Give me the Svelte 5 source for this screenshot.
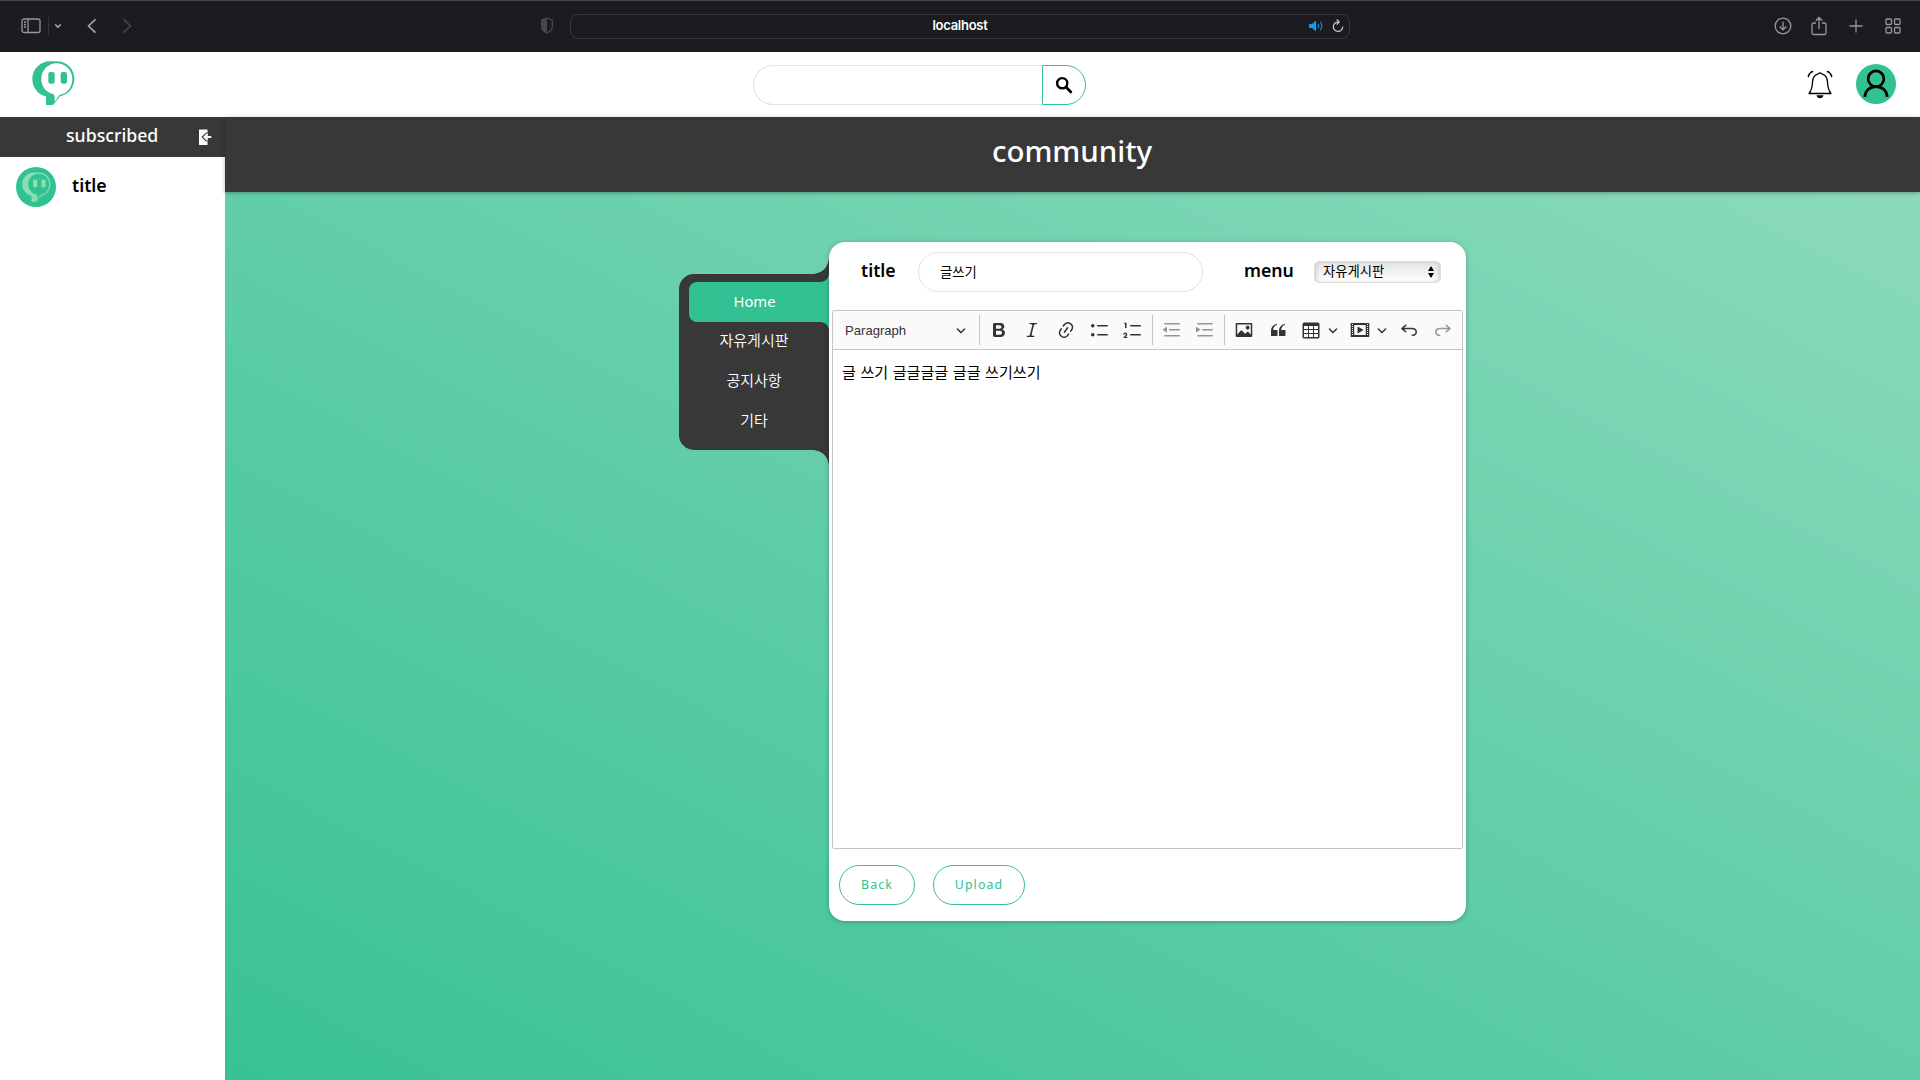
<script>
  const chev = 'M.941 4.523a.75.75 0 1 1 1.06-1.06l3.006 3.005 3.005-3.005a.75.75 0 1 1 1.06 1.06l-3.549 3.55a.75.75 0 0 1-1.168-.136L.941 4.523z';
  const lines = 'M2 3.75c0 .414.336.75.75.75h14.5a.75.75 0 1 0 0-1.5H2.75a.75.75 0 0 0-.75.75zm5 6c0 .414.336.75.75.75h9.5a.75.75 0 1 0 0-1.5h-9.5a.75.75 0 0 0-.75.75zM2.75 16.5h14.5a.75.75 0 1 0 0-1.5H2.75a.75.75 0 1 0 0 1.5z';
  const undo = 'm5.042 9.367 2.189 1.837a.75.75 0 0 1-.965 1.149l-3.788-3.18a.747.747 0 0 1-.21-.284.75.75 0 0 1 .17-.945L6.23 4.762a.75.75 0 1 1 .964 1.15L4.863 7.866h8.917A.75.75 0 0 1 14 7.9a4 4 0 1 1-1.477 7.718l.344-1.489a2.5 2.5 0 1 0 1.094-4.73l.008-.032H5.042z';
  const tools = [
    { name: 'Bold', d: 'M10.187 17H5.773c-.637 0-1.092-.138-1.364-.415-.273-.277-.409-.718-.409-1.323V4.738c0-.617.14-1.062.419-1.332.279-.27.73-.406 1.354-.406h4.68c.69 0 1.288.041 1.793.124.506.083.96.242 1.36.478.341.197.644.447.906.75a3.262 3.262 0 0 1 .808 2.162c0 1.401-.722 2.426-2.167 3.075C15.05 10.175 16 11.315 16 13.01a3.756 3.756 0 0 1-2.296 3.504 6.1 6.1 0 0 1-1.517.377c-.571.073-1.238.11-2 .11zm-.217-6.217H7v4.087h3.069c1.977 0 2.965-.69 2.965-2.072 0-.707-.256-1.22-.768-1.537-.512-.319-1.277-.478-2.296-.478zM7 5.13v3.619h2.606c.729 0 1.292-.067 1.69-.2a1.6 1.6 0 0 0 .91-.765c.165-.267.247-.566.247-.897 0-.707-.26-1.176-.778-1.409-.519-.232-1.31-.348-2.375-.348H7z' },
    { name: 'Italic', d: 'm9.586 14.633.021.004c-.036.335.095.655.393.962.082.083.173.15.274.201h1.474a.6.6 0 1 1 0 1.2H5.304a.6.6 0 0 1 0-1.2h1.15c.474-.07.809-.182 1.005-.334.157-.122.291-.32.404-.597l2.416-9.55a1.053 1.053 0 0 0-.281-.823 1.12 1.12 0 0 0-.442-.296H8.15a.6.6 0 0 1 0-1.2h6.443a.6.6 0 1 1 0 1.2h-1.195c-.376.056-.65.155-.823.296-.215.175-.423.439-.623.79l-2.366 9.347z' },
    { name: 'Link', d: 'm11.077 15 .991-1.416a.75.75 0 1 1 1.229.86l-1.148 1.64a.748.748 0 0 1-.217.206 5.251 5.251 0 0 1-8.503-5.955.741.741 0 0 1 .12-.274l1.147-1.639a.75.75 0 1 1 1.228.86L4.933 10.7l.006.003a3.75 3.75 0 0 0 6.132 4.294l.006.004zm5.494-5.335a.748.748 0 0 1-.12.274l-1.147 1.639a.75.75 0 1 1-1.228-.86l.86-1.23a3.75 3.75 0 0 0-6.144-4.301l-.86 1.229a.75.75 0 0 1-1.229-.86l1.148-1.64a.748.748 0 0 1 .217-.206 5.251 5.251 0 0 1 8.503 5.955zm-4.563-2.532a.75.75 0 0 1 .184 1.045l-3.155 4.505a.75.75 0 1 1-1.229-.86l3.155-4.506a.75.75 0 0 1 1.045-.184z' },
    { name: 'Bulleted List', d: 'M7 5.75c0 .414.336.75.75.75h9.5a.75.75 0 1 0 0-1.5h-9.5a.75.75 0 0 0-.75.75zm-6 0C1 4.784 1.777 4 2.75 4c.966 0 1.75.777 1.75 1.75 0 .966-.777 1.75-1.75 1.75C1.784 7.5 1 6.723 1 5.75zm6 9c0 .414.336.75.75.75h9.5a.75.75 0 1 0 0-1.5h-9.5a.75.75 0 0 0-.75.75zm-6 0c0-.966.777-1.75 1.75-1.75.966 0 1.75.777 1.75 1.75 0 .966-.777 1.75-1.75 1.75-.966 0-1.75-.777-1.75-1.75z' },
    { name: 'Numbered List', d: 'M7 5.75c0 .414.336.75.75.75h9.5a.75.75 0 1 0 0-1.5h-9.5a.75.75 0 0 0-.75.75zM3.5 3v5H2V3.7H1v-1h2.5V3zM.343 17.857l2.59-3.257H2.92a.6.6 0 1 0-1.04 0H.302a2 2 0 1 1 3.995 0h-.001c-.048.405-.16.734-.333.988-.175.254-.59.692-1.244 1.312H4.3v1h-4l.043-.043zM7 14.75a.75.75 0 0 1 .75-.75h9.5a.75.75 0 1 1 0 1.5h-9.5a.75.75 0 0 1-.75-.75z' },
    { sep: true },
    { name: 'Decrease indent', dim: true, d: lines + 'M4.368 6.95.98 9.358a.4.4 0 0 0 .013.661l3.39 2.207A.4.4 0 0 0 5 11.892V7.275a.4.4 0 0 0-.632-.326z' },
    { name: 'Increase indent', dim: true, d: lines + 'M1.632 6.95 5.02 9.358a.4.4 0 0 1-.013.661l-3.39 2.207A.4.4 0 0 1 1 11.892V7.275a.4.4 0 0 1 .632-.326z' },
    { sep: true },
    { name: 'Insert image', d: 'M6.91 10.54c.26-.23.64-.21.88.03l3.36 3.14 2.23-2.06a.64.64 0 0 1 .87 0l2.52 2.97V4.5H3.2v10.12l3.71-4.08zm10.27-7.51c.6 0 1.09.47 1.09 1.05v11.84c0 .59-.49 1.06-1.09 1.06H2.79c-.6 0-1.09-.47-1.09-1.06V4.08c0-.58.49-1.05 1.1-1.05h14.38zm-5.22 5.56a1.96 1.96 0 1 1 3.4-1.96 1.96 1.96 0 0 1-3.4 1.96z' },
    { name: 'Block quote', d: 'M3 10.423a6.5 6.5 0 0 1 6.056-6.408l.038.67C6.448 5.423 5.354 7.663 5.22 10H9c.552 0 .5.432.5.986v4.511c0 .554-.448.503-1 .503h-5c-.552 0-.5-.449-.5-1.003v-4.574zm8 0a6.5 6.5 0 0 1 6.056-6.408l.038.67c-2.646.739-3.74 2.979-3.873 5.315H17c.552 0 .5.432.5.986v4.511c0 .554-.448.503-1 .503h-5c-.552 0-.5-.449-.5-1.003v-4.574z' },
    { name: 'Insert table', menu: true, d: 'M3 6v3h4V6H3zm0 4v3h4v-3H3zm0 4v3h4v-3H3zm5 3h4v-3H8v3zm5 0h4v-3h-4v3zm4-4v-3h-4v3h4zm0-4V6h-4v3h4zm1.5 8a1.5 1.5 0 0 1-1.5 1.5H3A1.5 1.5 0 0 1 1.5 17V4c.222-.863 1.068-1.5 2-1.5h13c.932 0 1.778.637 2 1.5v13zM12 13v-3H8v3h4zm0-4V6H8v3h4z' },
    { name: 'Insert media', menu: true, d: 'M18.68 3.03c.6 0 .59-.03.59.55v12.84c0 .59.01.56-.59.56H1.29c-.6 0-.59.03-.59-.56V3.58c0-.58-.01-.55.6-.55h17.38zM15.77 15V5H4.2v10h11.57zM2 4v1h1V4H2zm0 2v1h1V6H2zm0 2v1h1V8H2zm0 2v1h1v-1H2zm0 2v1h1v-1H2zm0 2v1h1v-1H2zM17 4v1h1V4h-1zm0 2v1h1V6h-1zm0 2v1h1V8h-1zm0 2v1h1v-1h-1zm0 2v1h1v-1h-1zm0 2v1h1v-1h-1zM7.5 7.177a.4.4 0 0 1 .593-.351l5.133 2.824a.4.4 0 0 1 0 .7l-5.133 2.824a.4.4 0 0 1-.593-.35V7.176v.001z' },
    { name: 'Undo', d: undo },
    { name: 'Redo', dim: true, flip: true, d: undo }
  ];
  const menu = ['Home', '자유게시판', '공지사항', '기타'];
</script>

{#snippet mark()}
  <path fill-rule="evenodd" d="M54 1H75C105 1 127 25 127 54C127 82 107 102 84 106L63 132H42V106C18 101 1 80 1 54C1 25 24 1 54 1ZM74 7C48 7 28 28 28 54C28 77 42 94 63 99Q68 101 68 106V122L82 102C105 99 121 79 121 54C121 28 100 7 74 7Z" />
  <rect x="49" y="33" width="19" height="35" rx="6" />
  <rect x="86" y="33" width="19" height="35" rx="6" />
{/snippet}

<div class="page">
  <div class="chrome">
    <div class="left">
      <svg class="panel" width="20" height="16" viewBox="0 0 20 16"><rect x="1" y="1" width="18" height="13.5" rx="2" /><path d="M7 1v13.500M3 4h2M3 6.500h2M3 9h2" /></svg>
      <span class="bar"></span>
      <svg class="tiny" width="8" height="6" viewBox="0 0 8 6"><path d="M1.300 1.500 4 4.200 6.700 1.500" /></svg>
      <svg class="back" width="10" height="16" viewBox="0 0 10 16"><path d="M8.500 1.300 1.500 8l7 6.700" /></svg>
      <svg class="fwd" width="10" height="16" viewBox="0 0 10 16"><path d="m1.500 1.300 7 6.700-7 6.700" /></svg>
    </div>
    <div class="mid">
      <svg class="shield" width="14" height="17" viewBox="0 0 14 17"><path d="M7 1 12.300 3v7c0 2.500-2.500 4.500-5.300 6C4.200 14.500 1.700 12.500 1.700 10V3z" fill="none" stroke="#48474c" stroke-width="1.300" /><path d="M7 .5 1 2.700V10c0 3 3 5 6 6.500z" fill="#48474c" /></svg>
      <div class="url">
        <span>localhost</span>
        <div class="urlicons">
          <svg width="14" height="12" viewBox="0 0 14 12"><path d="M0 4h3l4-3.500v11L3 8H0z" fill="#0a9bf5" /><path d="M9 3.800q1.400 2.200 0 4.400M11.300 1.600q3 4.400 0 8.800" fill="none" stroke="#0a84d5" stroke-width="1.200" /></svg>
          <svg width="12" height="14" viewBox="0 0 12 14"><path d="M6.300 3A4.700 4.700 0 1 0 10.700 7.700M4.700.5 7.200 3 4.700 5.500" fill="none" stroke="#c9c9cb" stroke-width="1.200" /></svg>
        </div>
      </div>
    </div>
    <div class="right">
      <svg width="18" height="18" viewBox="0 0 18 18"><circle cx="9" cy="9" r="7.800" /><path d="M9 4.700v8M5.700 9.500 9 12.800l3.300-3.300" /></svg>
      <svg width="18" height="20" viewBox="0 0 18 20"><path d="M6 7H3.500Q2 7 2 8.500V17q0 1.500 1.500 1.500h11q1.500 0 1.500-1.500V8.500Q16 7 14.500 7H12M9 13V1.700M5.800 4.700 9 1.500l3.200 3.200" /></svg>
      <svg width="18" height="18" viewBox="0 0 18 18"><path d="M9 2.500v13M2.500 9h13" /></svg>
      <svg width="18" height="18" viewBox="0 0 18 18"><rect x="2" y="2" width="5.500" height="5.500" rx="1" /><rect x="10.500" y="2" width="5.500" height="5.500" rx="1" /><rect x="2" y="10.500" width="5.500" height="5.500" rx="1" /><rect x="10.500" y="10.500" width="5.500" height="5.500" rx="1" /></svg>
    </div>
  </div>

  <header>
    <svg class="logo" width="43" height="44" viewBox="0 0 129 132">{@render mark()}</svg>
    <div class="search">
      <div class="field"></div>
      <div class="go"><svg width="18" height="18" viewBox="0 0 18 18"><circle cx="7.200" cy="7.200" r="5.100" fill="none" stroke="#000" stroke-width="2.400" /><path d="m11 11 4.800 4.900" stroke="#000" stroke-width="2.800" stroke-linecap="round" /></svg></div>
    </div>
    <div class="user">
      <svg width="26" height="30" viewBox="0 0 26 30"><path d="M2 23.500C5.200 19.500 5.200 17 5.500 12c.2-4 2-6.700 5-7.800L13 2.700l2.500 1.500c3 1.100 4.800 3.800 5 7.800.3 5 .3 7.500 3.500 11.500z" fill="none" stroke="#000" stroke-width="1.300" stroke-linejoin="round" /><path d="M9.500 25.300h7c-.3 2-1.700 3-3.500 3s-3.200-1-3.500-3z" /><path d="M1.300 6.500C2 4 3.300 2.300 5.500 1.500M24.700 6.500c-.7-2.500-2-4.200-4.200-5" fill="none" stroke="#000" stroke-width="1.500" stroke-linecap="round" stroke-dasharray="3.400 1" /></svg>
      <div class="avatar"><svg width="40" height="40" viewBox="0 0 40 40"><circle cx="20" cy="14.800" r="7.900" /><path d="M8.800 33C9 27 13.500 22.700 20 22.700S31 27 31.200 33" /></svg></div>
    </div>
  </header>

  <div class="body">
    <aside>
      <div class="subhead"><span>subscribed</span>
        <svg width="14" height="17" viewBox="0 0 14 17"><path d="M1 .5h8.500V5.500H7L4.500 8 7 11.500h2.500v4.500H1z" fill="#fff" /><path d="M9.800 4.600 6.300 8l3.500 3.400" fill="none" stroke="#383838" stroke-width="4" /><path d="M13.300 8H7M9.600 5 6.600 8l3 3" fill="none" stroke="#fff" stroke-width="2.200" /></svg>
      </div>
      <div class="sub">
        <div class="badge"><svg width="29" height="30" viewBox="0 0 129 132">{@render mark()}</svg></div>
        <span>title</span>
      </div>
    </aside>
    <main>
      <div class="banner">community</div>
      <div class="stage">
        <nav>
          {#each menu as item, i}
            <div class="item" class:active={i === 0}>{item}</div>
          {/each}
        </nav>
        <section>
          <div class="form">
            <b class="l1">title</b>
            <div class="input">글쓰기</div>
            <b class="l2">menu</b>
            <div class="select"><span>자유게시판</span><svg width="8" height="12" viewBox="0 0 8 12"><path d="M4 0 7 5H1zM4 12l3-5H1z" /></svg></div>
          </div>
          <div class="editor">
            <div class="toolbar">
              <div class="para"><span>Paragraph</span><svg width="10" height="10" viewBox="0 0 10 10"><path d={chev} /></svg></div>
              <i class="sep"></i>
              {#each tools as t}
                {#if t.sep}
                  <i class="sep"></i>
                {:else}
                  <div class="tool" class:dim={t.dim} class:menu={t.menu} title={t.name}>
                    <svg class:flip={t.flip} width="20" height="20" viewBox="0 0 20 20"><path d={t.d} /></svg>
                    {#if t.menu}<svg class="caret" width="10" height="10" viewBox="0 0 10 10"><path d={chev} /></svg>{/if}
                  </div>
                {/if}
              {/each}
            </div>
            <div class="text">글 쓰기 글글글글 글글 쓰기쓰기</div>
          </div>
          <div class="actions">
            <div class="btn">Back</div>
            <div class="btn up">Upload</div>
          </div>
        </section>
      </div>
    </main>
  </div>
</div>

<style>
  :global(body) { overflow: hidden; }
  .page, .page * { box-sizing: border-box; }
  .page { width: 1920px; height: 1080px; display: flex; flex-direction: column; background: #fff; font-family: 'Noto Sans', 'Noto Sans CJK KR', sans-serif; color: #000; }
  svg { display: block; flex: none; }
  .chrome { height: 52px; padding-bottom: 2px; background: #1c1b20; border-top: 1px solid #48484c; display: grid; grid-template-columns: 540px 1fr 158px; align-items: center; flex: none; }
  .chrome .left { display: flex; align-items: center; padding-left: 21px; }
  .left svg, .right svg { fill: none; stroke: #98989b; stroke-width: 1.3; }
  .bar { width: 1px; height: 18px; background: #35343a; margin: 0 5px 0 7px; }
  .left .tiny { stroke: #b0b0b3; stroke-width: 1.6; }
  .left .back { margin-left: 25px; stroke: #aaaaad; stroke-width: 1.6; }
  .left .fwd { margin-left: 25px; stroke: #48474c; stroke-width: 1.6; }
  .mid { display: flex; align-items: center; gap: 16px; }
  .url { width: 780px; height: 25px; margin-top: 1px; border: 1px solid #39383d; border-radius: 8px; display: grid; grid-template-columns: 1fr auto 1fr; align-items: center; color: #fff; font: 600 13px/21px Inter, sans-serif; letter-spacing: -.28px; }
  .url span { grid-column: 2; margin-top: -2px; }
  .urlicons { display: flex; gap: 9px; align-items: center; justify-content: flex-end; padding-right: 5px; margin-top: -1px; }
  .right { display: flex; align-items: center; gap: 18.7px; padding-left: 11.5px; }
  header { height: 65px; display: flex; align-items: flex-start; flex: none; padding-top: 9px; }
  .logo { fill: #32c192; margin-left: 32px; }
  .search { display: flex; margin: 4px 0 0 678px; }
  .field { width: 289px; height: 40px; border: 1px solid #e2e2e2; border-right: 0; border-radius: 20px 0 0 20px; }
  .go { width: 44px; height: 40px; border: 1px solid #32c192; border-radius: 0 20px 20px 0; display: flex; align-items: center; padding-left: 12px; }
  .user { display: flex; align-items: center; gap: 23px; margin: 3px 0 0 721px; }
  .user > svg { margin-top: 2px; }
  .avatar { width: 40px; height: 40px; border-radius: 50%; background: #32c192; }
  .avatar svg { fill: none; stroke: #000; stroke-width: 2.7; stroke-linecap: butt; }
  .body { flex: 1; display: flex; min-height: 0; }
  aside { width: 225px; flex: none; }
  .subhead { height: 40px; background: #383838; color: #fff; display: flex; align-items: center; padding-left: 66px; font-size: 17.7px; font-weight: 500; }
  .subhead span { width: 132px; line-height: 37px; height: 40px; }
  .sub { display: flex; align-items: center; gap: 16px; padding: 10px 16px; font-size: 17.7px; font-weight: 600; }
  .sub span { margin-top: -4px; }
  .badge { width: 40px; height: 40px; border-radius: 50%; background: #32c192; display: flex; align-items: center; justify-content: center; }
  .badge svg { fill: #88dfb0; }
  main { flex: 1; display: flex; flex-direction: column; }
  .banner { height: 75px; flex: none; background: #383838; color: #fff; font-size: 29.5px; font-weight: 500; text-align: center; line-height: 68px; padding-right: 1px; box-shadow: 0 1px 4px rgba(0, 0, 0, .3); z-index: 1; }
  .stage { flex: 1; background: linear-gradient(to top right, #38c294, #8bdabb); display: flex; align-items: flex-start; padding: 50px 0 0 454px; }
  nav { width: 150px; height: 176px; margin-top: 32px; padding: 8px 0 0 10px; background: #383838; border-radius: 15px 0 0 15px; position: relative; }
  nav::before, nav::after { content: ''; position: absolute; right: 0; width: 16px; height: 16px; }
  nav::before { top: -16px; background: radial-gradient(circle at 0 0, transparent 15.5px, #383838 16px); }
  nav::after { bottom: -16px; background: radial-gradient(circle at 0 100%, transparent 15.5px, #383838 16px); }
  .item { height: 40px; line-height: 37px; color: #fff; font-size: 15px; text-align: center; padding-right: 10px; font-weight: 350; }
  .active { background: #32c192; border-radius: 8px 0 0 8px; position: relative; font-weight: 400; font-size: 14.8px; line-height: 38px; padding-right: 9px; }
  .active::before, .active::after { content: ''; position: absolute; right: 0; width: 8px; height: 8px; }
  .active::before { top: -8px; background: radial-gradient(circle at 0 0, transparent 7.5px, #32c192 8px); }
  .active::after { bottom: -8px; background: radial-gradient(circle at 0 100%, transparent 7.5px, #32c192 8px); }
  section { width: 637px; height: 679px; background: #fff; border-radius: 16px; box-shadow: 0 1px 5px rgba(0, 0, 0, .25); padding: 0 3px; z-index: 1; }
  .form { height: 68px; padding: 10px 22px 0 29px; display: flex; align-items: flex-start; }
  b { font-size: 17.7px; font-weight: 600; line-height: 37px; }
  .l1 { width: 57px; }
  .input { width: 285px; height: 40px; border: 1px solid #e2e2e2; border-radius: 20px; padding-left: 21px; font-size: 13.333px; line-height: 38px; }
  .l2 { margin-left: 41px; width: 70px; }
  .select { width: 127px; flex: none; height: 22px; margin-top: 9px; border-radius: 5px; border: 1px solid #ddd; box-shadow: inset 3px 0 4px -2px #c8c8c8, inset -3px 0 4px -2px #c8c8c8; background: linear-gradient(#e4e4e4, #fff); display: flex; justify-content: space-between; align-items: center; padding: 0 5px 0 8px; font-size: 13.333px; line-height: 18px; }
  .select span { margin-top: -3px; }
  .editor { border: 1px solid #c4c4c4; border-radius: 2px; height: 539px; }
  .toolbar { height: 39px; background: #fafafa; border-bottom: 1px solid #c4c4c4; display: flex; align-items: center; fill: #333; }
  .tool svg { margin-top: -1px; }
  .para { width: 146px; display: flex; align-items: center; justify-content: space-between; padding: 0 13px 0 12px; color: #333; font: 13.1px 'Liberation Sans', sans-serif; }
  .sep { width: 1px; height: 30px; background: #c4c4c4; margin: 0 2px; flex: none; }
  .para + .sep { margin: 0 2px 0 0; }
  .tool { width: 33.6px; display: flex; justify-content: center; flex: none; align-items: center; }
  .tool.menu { width: 49px; justify-content: flex-start; padding-left: 6.500px; }
  .tool .caret { margin: 0 0 0 7px; }
  .dim { opacity: .5; }
  .flip { transform: scaleX(-1); }
  .text { padding: 9px 9px; font-size: 15.1px; line-height: 26px; word-spacing: .6px; }
  .actions { display: flex; gap: 18px; padding: 16px 7px; }
  .btn { width: 76px; height: 40px; border: 1px solid #32c192; border-radius: 20px; color: #32c192; text-align: center; font-size: 12.400px; line-height: 38px; letter-spacing: 1.1px; }
  .up { width: 92px; }
</style>
